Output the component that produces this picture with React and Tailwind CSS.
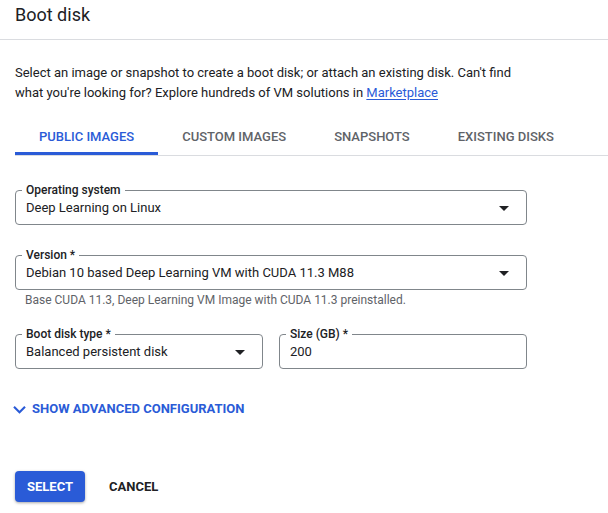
const BLUE = 'text-[#2a5bd7]';

const Caret = () => (
  <svg width="24" height="24" viewBox="0 0 24 24" className="shrink-0 fill-[#202124]">
    <path d="M7 10l5 5 5-5z" />
  </svg>
);

const Field = ({ label, value, select = true }) => (
  <div className="relative h-[35px] rounded-[4px] border border-[#80868b] flex items-center pl-[10px] pr-[10px]">
    <span className="absolute -top-[9px] left-[6px] bg-white px-[4px] text-[12px] leading-[16px] font-medium text-[#202124]">
      {label}
    </span>
    <span className="flex-1 text-[13px] leading-[20px] text-[#202124]">{value}</span>
    {select && <Caret />}
  </div>
);

const tabs = ['Public images', 'Custom images', 'Snapshots', 'Existing disks'];

export default function App() {
  return (
    <div className="w-[608px] h-[513px] bg-white overflow-hidden font-['Roboto',sans-serif] text-[#202124]">
      {/* Header */}
      <div className="h-[40px] border-b border-[#dadce0] pl-[15px] pt-[3px]">
        <h1 className="text-[18px] leading-[24px]">Boot disk</h1>
      </div>

      <p className="mt-[23px] px-[15px] text-[13px] leading-[20px]">
        Select an image or snapshot to create a boot disk; or attach an existing disk. Can't find
        <br />
        what you're looking for? Explore hundreds of VM solutions in{' '}
        <a href="#" className={`${BLUE} underline underline-offset-2`}>Marketplace</a>
      </p>

      {/* Tabs */}
      <div className="mt-[16px] ml-[15px] flex border-b border-[#dadce0] h-[37px]">
        {tabs.map((t, i) => (
          <button
            key={t}
            className={`px-6 h-[36px] flex items-center uppercase text-[13px] font-medium ${
              i === 0 ? `${BLUE} border-b-[3px] border-[#2a5bd7] pt-[3px]` : 'text-[#5f6368]'
            }`}
          >
            {t}
          </button>
        ))}
      </div>

      {/* Form */}
      <div className="px-[15px] w-[542px]">
        <div className="mt-[34px]">
          <Field label="Operating system" value="Deep Learning on Linux" />
        </div>
        <div className="mt-[30px]">
          <Field label="Version *" value="Debian 10 based Deep Learning VM with CUDA 11.3 M88" />
        </div>
        <p className="mt-[2px] pl-[10px] text-[12px] leading-[16px] text-[#5f6368]">
          Base CUDA 11.3, Deep Learning VM Image with CUDA 11.3 preinstalled.
        </p>
        <div className="mt-[26px] grid grid-cols-2 gap-4">
          <Field label="Boot disk type *" value="Balanced persistent disk" />
          <Field label="Size (GB) *" value="200" select={false} />
        </div>
      </div>

      <button className={`mt-[30px] ml-[7px] flex items-center h-[20px] ${BLUE} text-[13px] font-bold uppercase`}>
        <svg width="25" height="25" viewBox="0 0 24 24" className="fill-[#2a5bd7]">
          <path d="M16.59 8.59L12 13.17 7.41 8.59 6 10l6 6 6-6z" />
        </svg>
        <span>Show advanced configuration</span>
      </button>

      <div className="mt-[52px] ml-[15px] flex items-center gap-3">
        <button className="h-[31px] px-3 rounded-[4px] bg-[#2a5bd7] text-white text-[13px] font-bold shadow-[0_1px_3px_rgba(0,0,0,0.35)]">
          SELECT
        </button>
        <button className="h-[31px] px-3 text-[13px] font-bold text-[#202124]">CANCEL</button>
      </div>
    </div>
  );
}
